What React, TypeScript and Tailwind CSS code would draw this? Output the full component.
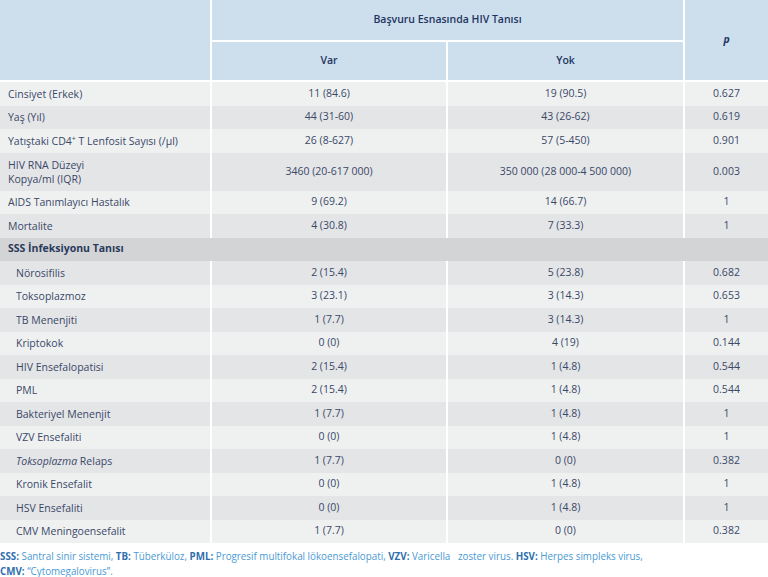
import React from "react";

type Row = { label: React.ReactNode; a: string; b: string; p: string; indent?: boolean; tall?: boolean };

const mainRows: Row[] = [
  { label: "Cinsiyet (Erkek)", a: "11 (84.6)", b: "19 (90.5)", p: "0.627" },
  { label: "Yaş (Yıl)", a: "44 (31-60)", b: "43 (26-62)", p: "0.619" },
  {
    label: (
      <span>
        Yatıştaki CD4<sup className="text-[7px] leading-none">+</sup> T Lenfosit Sayısı (/µl)
      </span>
    ),
    a: "26 (8-627)",
    b: "57 (5-450)",
    p: "0.901",
  },
  {
    label: (
      <span>
        HIV RNA Düzeyi
        <br />
        Kopya/ml (IQR)
      </span>
    ),
    a: "3460 (20-617 000)",
    b: "350 000 (28 000-4 500 000)",
    p: "0.003",
    tall: true,
  },
  { label: "AIDS Tanımlayıcı Hastalık", a: "9 (69.2)", b: "14 (66.7)", p: "1" },
  { label: "Mortalite", a: "4 (30.8)", b: "7 (33.3)", p: "1" },
];

const sssRows: Row[] = [
  { label: "Nörosifilis", a: "2 (15.4)", b: "5 (23.8)", p: "0.682" },
  { label: "Toksoplazmoz", a: "3 (23.1)", b: "3 (14.3)", p: "0.653" },
  { label: "TB Menenjiti", a: "1 (7.7)", b: "3 (14.3)", p: "1" },
  { label: "Kriptokok", a: "0 (0)", b: "4 (19)", p: "0.144" },
  { label: "HIV Ensefalopatisi", a: "2 (15.4)", b: "1 (4.8)", p: "0.544" },
  { label: "PML", a: "2 (15.4)", b: "1 (4.8)", p: "0.544" },
  { label: "Bakteriyel Menenjit", a: "1 (7.7)", b: "1 (4.8)", p: "1" },
  { label: "VZV Ensefaliti", a: "0 (0)", b: "1 (4.8)", p: "1" },
  {
    label: (
      <span>
        <i>Toksoplazma</i> Relaps
      </span>
    ),
    a: "1 (7.7)",
    b: "0 (0)",
    p: "0.382",
  },
  { label: "Kronik Ensefalit", a: "0 (0)", b: "1 (4.8)", p: "1" },
  { label: "HSV Ensefaliti", a: "0 (0)", b: "1 (4.8)", p: "1" },
  { label: "CMV Meningoensefalit", a: "1 (7.7)", b: "0 (0)", p: "0.382" },
];

function DataRow({ row, idx }: { row: Row; idx: number }) {
  const bg = idx % 2 === 0 ? "bg-[#eff1f1]" : "bg-[#e4e5e7]";
  const h = row.tall ? "h-[38px]" : "h-[23.5px]";
  return (
    <div className={`grid grid-cols-[210px_236px_237px_85px] ${bg} ${h}`}>
      <div className={`flex items-center leading-[14px] ${row.indent ? "pl-[16px]" : "pl-[8px]"}`}>
        {row.label}
      </div>
      <div className="flex items-center justify-center border-l-2 border-white">{row.a}</div>
      <div className="flex items-center justify-center border-l-2 border-white">{row.b}</div>
      <div className="flex items-center justify-center border-l-2 border-white">{row.p}</div>
    </div>
  );
}

function Abbr({ children }: { children: React.ReactNode }) {
  return <b className="text-[#2f6fae]">{children}</b>;
}

export default function App() {
  return (
    <div
      className="w-[768px] h-[577px] bg-white text-[#3a4868] text-[10.5px] overflow-hidden"
      style={{ fontFamily: '"Open Sans", "Noto Sans", sans-serif' }}
    >
      {/* header */}
      <div className="grid grid-cols-[210px_236px_237px_85px] grid-rows-[40px_40px] bg-[#cddfed] text-[#1f3561] font-semibold border-b-2 border-white">
        <div className="row-span-2" />
        <div className="col-span-2 border-l-2 border-white flex items-center justify-center">
          Başvuru Esnasında HIV Tanısı
        </div>
        <div className="row-span-2 border-l-2 border-white flex items-center justify-center italic font-bold">
          p
        </div>
        <div className="border-l-2 border-t-2 border-white flex items-center justify-center">Var</div>
        <div className="border-l-2 border-t-2 border-white flex items-center justify-center">Yok</div>
      </div>

      {mainRows.map((r, i) => (
        <DataRow key={i} row={r} idx={i} />
      ))}

      <div className="h-[23.5px] bg-[#d3d4d6] flex items-center pl-[8px] font-bold text-[#2a3a5c]">
        SSS İnfeksiyonu Tanısı
      </div>

      {sssRows.map((r, i) => (
        <DataRow key={i} row={{ ...r, indent: true }} idx={i + 1} />
      ))}

      {/* footnote */}
      <div className="pt-[5px] text-[11px] leading-[15px] text-[#4a9ad4] whitespace-nowrap">
        <div className="origin-left scale-x-[0.89]">
          <Abbr>SSS:</Abbr> Santral sinir sistemi, <Abbr>TB:</Abbr> Tüberküloz, <Abbr>PML:</Abbr> Progresif multifokal
          lökoensefalopati, <Abbr>VZV:</Abbr> Varicella&nbsp;&nbsp; zoster virus. <Abbr>HSV:</Abbr> Herpes simpleks virus,
        </div>
        <div className="origin-left scale-x-[0.89]">
          <Abbr>CMV:</Abbr> “Cytomegalovirus”.
        </div>
      </div>
    </div>
  );
}
